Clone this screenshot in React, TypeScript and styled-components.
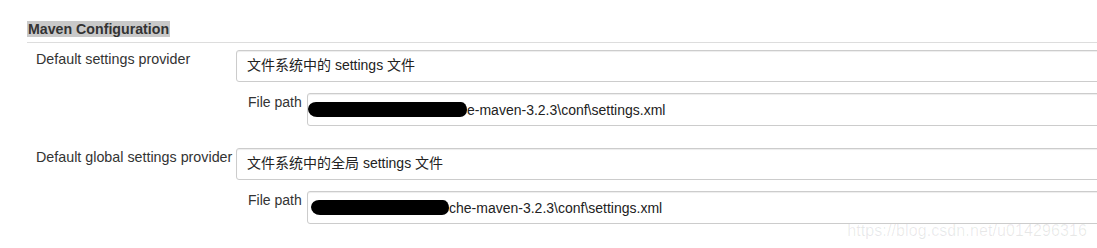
import React from "react";
import styled, { createGlobalStyle } from "styled-components";

const Global = createGlobalStyle`
  html, body { margin: 0; padding: 0; background: #fff; }
  body { font-family: "Liberation Sans", Arial, "Noto Sans CJK SC", sans-serif; color: #333; overflow: hidden; }
`;

const Page = styled.div`
  position: relative;
  width: 1097px;
  height: 248px;
  overflow: hidden;
  padding: 21px 0 0 27px;
  box-sizing: border-box;
`;

const SectionTitle = styled.div`
  width: fit-content;
  background: #c9c9c9;
  font-weight: bold;
  font-size: 14.2px;
  line-height: 16px;
  height: 16px;
  padding: 0 1px;
  color: #333;
`;

const Divider = styled.div`
  border-top: 1px solid #ddd;
  margin-top: 5px;
  margin-right: -20px;
`;

const Entry = styled.div<{ $top: number }>`
  display: grid;
  grid-template-columns: 209px 1fr;
  margin-top: ${(p) => p.$top}px;
`;

const Label = styled.div`
  font-size: 14.3px;
  line-height: 16px;
  padding: 1px 0 0 9px;
  color: #333;
  white-space: nowrap;
`;

const Field = styled.div`
  display: flex;
  flex-direction: column;
  gap: 11px;
`;

const Box = styled.div<{ $height: number; $pad: number }>`
  box-sizing: border-box;
  height: ${(p) => p.$height}px;
  width: calc(100% + 30px);
  border: 1px solid #ccc;
  border-radius: 3px;
  box-shadow: inset 0 1px 1px rgba(0, 0, 0, 0.075);
  display: flex;
  align-items: center;
  padding-left: ${(p) => p.$pad}px;
  color: #222;
  white-space: nowrap;
`;

const SelectText = styled.span`
  font-family: "Liberation Sans", Arial, "Noto Sans CJK SC", sans-serif;
  font-size: 14px;
  line-height: 16px;
  margin-top: -2px;
`;

const SubRow = styled.div`
  display: grid;
  grid-template-columns: 59px 1fr;
  padding-left: 12px;
`;

const SubLabel = styled.div`
  font-size: 14px;
  line-height: 16px;
  padding-top: 1px;
  color: #333;
  white-space: nowrap;
`;

const PathText = styled.span`
  font-size: 14px;
  line-height: 16px;
  display: flex;
  align-items: center;
`;

const Redaction = styled.span<{ $w: number; $offset: number }>`
  display: inline-block;
  width: ${(p) => p.$w}px;
  height: 15px;
  margin-left: ${(p) => p.$offset}px;
  background: #000;
  border-radius: 8px 6px 7px 9px / 7px 8px 7px 8px;
`;

const Watermark = styled.div`
  position: absolute;
  right: 10px;
  bottom: 8px;
  font-size: 16px;
  color: rgba(0, 0, 0, 0.09);
  letter-spacing: 0.1px;
`;

type EntryProps = {
  label: string;
  selection: string;
  top: number;
  blobWidth: number;
  blobOffset: number;
  tail: string;
};

function ConfigEntry({ label, selection, top, blobWidth, blobOffset, tail }: EntryProps) {
  return (
    <Entry $top={top}>
      <Label>{label}</Label>
      <Field>
        <Box $height={32} $pad={10}>
          <SelectText>{selection}</SelectText>
        </Box>
        <SubRow>
          <SubLabel>File path</SubLabel>
          <Box $height={33} $pad={0}>
            <PathText>
              <Redaction $w={blobWidth} $offset={blobOffset} />
              {tail}
            </PathText>
          </Box>
        </SubRow>
      </Field>
    </Entry>
  );
}

export default function App() {
  return (
    <>
      <Global />
      <Page>
        <SectionTitle>Maven Configuration</SectionTitle>
        <Divider />
        <ConfigEntry
          top={7}
          label="Default settings provider"
          selection="文件系统中的 settings 文件"
          blobWidth={159}
          blobOffset={0}
          tail="e-maven-3.2.3\conf\settings.xml"
        />
        <ConfigEntry
          top={22}
          label="Default global settings provider"
          selection="文件系统中的全局 settings 文件"
          blobWidth={138}
          blobOffset={3}
          tail="che-maven-3.2.3\conf\settings.xml"
        />
        <Watermark>https://blog.csdn.net/u014296316</Watermark>
      </Page>
    </>
  );
}
